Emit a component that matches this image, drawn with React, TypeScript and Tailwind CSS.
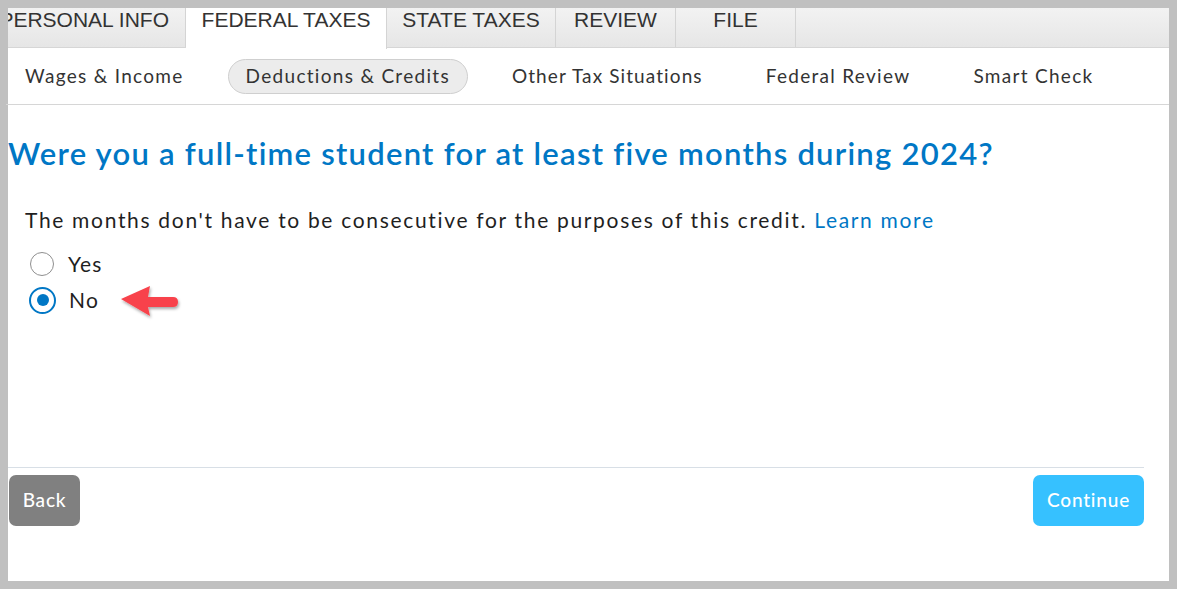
import React from "react";

const tabs = [
  { label: "PERSONAL INFO", w: "w-[178px]", active: false, first: true },
  { label: "FEDERAL TAXES", w: "w-[201px]", active: true },
  { label: "STATE TAXES", w: "w-[169px]", active: false },
  { label: "REVIEW", w: "w-[120px]", active: false },
  { label: "FILE", w: "w-[120px]", active: false },
];

const steps = [
  "Wages & Income",
  "Deductions & Credits",
  "Other Tax Situations",
  "Federal Review",
  "Smart Check",
];

const RedArrow = () => (
  <svg width="66" height="42" viewBox="0 0 66 42" className="ml-[18px] mt-[4px]">
    <defs>
      <filter id="sh" x="-20%" y="-20%" width="150%" height="160%">
        <feDropShadow dx="1" dy="2" stdDeviation="1.5" floodColor="#000" floodOpacity="0.35" />
      </filter>
    </defs>
    <path
      d="M4 18 L33 5 L31 16 L56 16 Q61 16 61 21 Q61 26 56 26 L31 26 L33 35 Z"
      fill="#f8434b"
      filter="url(#sh)"
    />
  </svg>
);

const App = () => {
  return (
    <div className="w-[1177px] h-[589px] bg-[#c0c0c0] pl-[8px] pr-[8px] pt-[8px] pb-[8px]">
      <div className="w-full h-full bg-white flex flex-col font-['Lato',sans-serif] text-[#222]">
        <div className="h-[40px] flex bg-gradient-to-b from-[#f2f2f2] to-[#e6e6e6] border-b border-[#d6d6d6] font-['Liberation_Sans',Arial,sans-serif] text-[21px] leading-[24px] text-[#333]">
          {tabs.map((t) => (
            <div
              key={t.label}
              className={
                t.first
                  ? `${t.w} h-full flex justify-end pr-[16px] overflow-hidden whitespace-nowrap border-r border-[#d4d4d4]`
                  : t.active
                  ? `${t.w} h-[41px] bg-white flex justify-center border-r border-[#d4d4d4]`
                  : `${t.w} h-full flex justify-center border-r border-[#d4d4d4]`
              }
            >
              {t.label}
            </div>
          ))}
        </div>
        <div className="h-[57px] flex items-center gap-[25px] -ml-[2px] border-b border-[#d6d6d6] text-[19px] tracking-[1.3px] text-[#333]">
          {steps.map((s) => (
            <div
              key={s}
              className={
                s === "Deductions & Credits"
                  ? "px-[17px] h-[35px] flex items-center rounded-full bg-[#ececec] border border-[#cfcfcf]"
                  : s === "Other Tax Situations"
                  ? "px-[19px] h-[35px] flex items-center tracking-[1.1px]"
                  : "px-[19px] h-[35px] flex items-center"
              }
            >
              {s}
            </div>
          ))}
        </div>
        <h1 className="mt-[28px] text-[31px] font-semibold text-[#0077c5] leading-[40px] tracking-[1.25px] whitespace-nowrap">
          Were you a full-time student for at least five months during 2024?
        </h1>
        <p className="mt-[33px] ml-[17px] text-[21px] leading-[28px] tracking-[1.68px] text-[#1f1f1f]">
          The months don't have to be consecutive for the purposes of this credit.{" "}
          <span className="text-[#0077c5]">Learn more</span>
        </p>
        <div className="mt-[17px] ml-[22px] flex flex-col gap-[10px] text-[21px] tracking-[1.2px] text-[#1f1f1f]">
          <label className="flex items-center h-[26px]">
            <span className="w-[24px] h-[24px] rounded-full border border-[#8f8f8f] bg-white" />
            <span className="ml-[14px]">Yes</span>
          </label>
          <label className="flex items-center h-[26px]">
            <span className="w-[27px] h-[27px] -ml-[1px] rounded-full border-2 border-[#0077c5] bg-white flex items-center justify-center">
              <span className="w-[12px] h-[12px] rounded-full bg-[#0077c5]" />
            </span>
            <span className="ml-[13px]">No</span>
            <RedArrow />
          </label>
        </div>
        <div className="flex-1" />
        <div className="mr-[25px] border-t border-[#d8dfe6] pt-[7px] pb-[55px] flex justify-between">
          <button className="ml-[1px] w-[71px] h-[51px] rounded-[7px] bg-[#808080] text-white text-[19px] tracking-[0.8px] font-medium">
            Back
          </button>
          <button className="w-[111px] h-[51px] rounded-[7px] bg-[#36c1ff] text-white text-[19px] tracking-[0.8px] font-medium">
            Continue
          </button>
        </div>
      </div>
    </div>
  );
};

export default App;
